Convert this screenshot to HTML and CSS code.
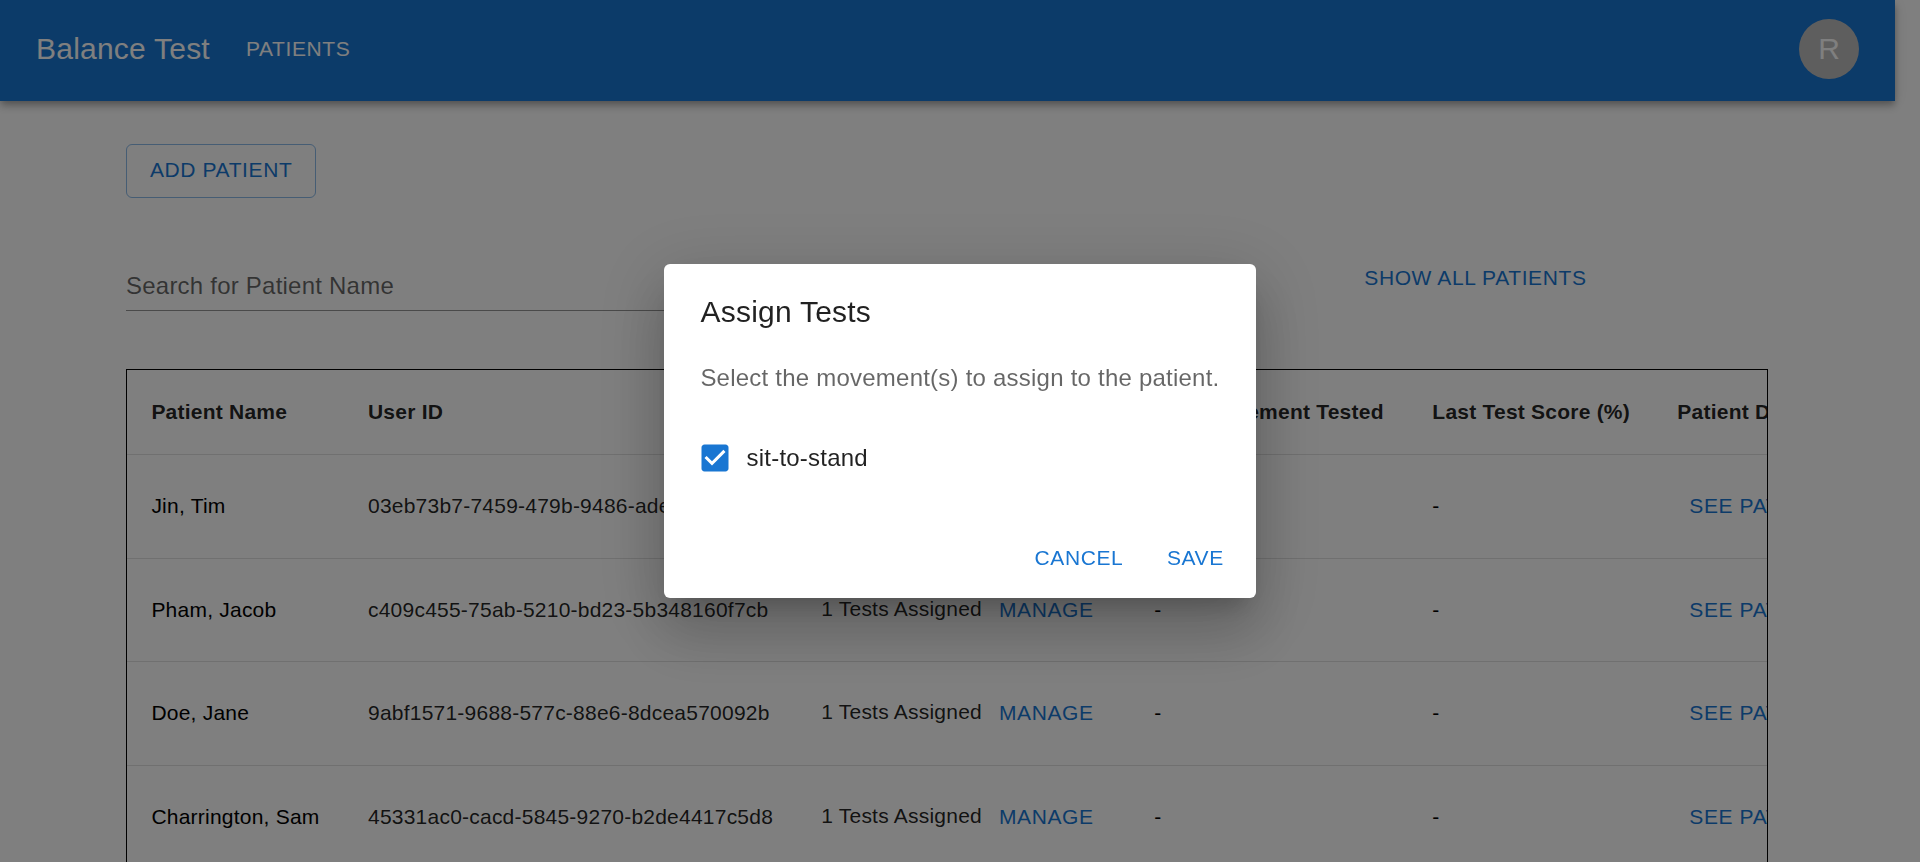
FILE: index.html
```
<!DOCTYPE html>
<html lang="en">
<head>
<meta charset="utf-8">
<title>Balance Test</title>
<link rel="stylesheet" href="styles.css">
</head>
<body>
<div class="page">
  <header class="appbar">
    <div class="brand">Balance Test</div>
    <a class="nav-link">PATIENTS</a>
    <div class="avatar">R</div>
  </header>
  <main class="content">
    <button class="btn btn-outlined">ADD PATIENT</button>
    <div class="search-row">
      <div class="search-field">Search for Patient Name</div>
      <button class="btn show-all">SHOW ALL PATIENTS</button>
    </div>
    <div class="table">
      <div class="row head">
        <div class="cell">Patient Name</div><div class="cell">User ID</div><div class="cell">Assigned Tests</div><div class="cell">Last Movement Tested</div><div class="cell">Last Test Score (%)</div><div class="cell">Patient Details</div>
      </div>
      <div class="row">
        <div class="cell name">Jin, Tim</div><div class="cell">03eb73b7-7459-479b-9486-ade</div><div class="cell tests"><span class="count">1 Tests Assigned</span><button class="btn">MANAGE</button></div><div class="cell name">-</div><div class="cell name">-</div><div class="cell"><button class="btn">SEE PATIENT</button></div>
      </div>
      <div class="row">
        <div class="cell name">Pham, Jacob</div><div class="cell">c409c455-75ab-5210-bd23-5b348160f7cb</div><div class="cell tests"><span class="count">1 Tests Assigned</span><button class="btn">MANAGE</button></div><div class="cell name">-</div><div class="cell name">-</div><div class="cell"><button class="btn">SEE PATIENT</button></div>
      </div>
      <div class="row">
        <div class="cell name">Doe, Jane</div><div class="cell">9abf1571-9688-577c-88e6-8dcea570092b</div><div class="cell tests"><span class="count">1 Tests Assigned</span><button class="btn">MANAGE</button></div><div class="cell name">-</div><div class="cell name">-</div><div class="cell"><button class="btn">SEE PATIENT</button></div>
      </div>
      <div class="row">
        <div class="cell name">Charrington, Sam</div><div class="cell">45331ac0-cacd-5845-9270-b2de4417c5d8</div><div class="cell tests"><span class="count">1 Tests Assigned</span><button class="btn">MANAGE</button></div><div class="cell name">-</div><div class="cell name">-</div><div class="cell"><button class="btn">SEE PATIENT</button></div>
      </div>
    </div>
  </main>
</div>
<div class="backdrop">
  <div class="dialog" role="dialog">
    <h2 class="dialog-title">Assign Tests</h2>
    <div class="dialog-content">
      <p class="dialog-text">Select the movement(s) to assign to the patient.</p>
      <label class="check">
        <svg class="check-icon" viewBox="0 0 24 24"><path d="M19 3H5c-1.11 0-2 .9-2 2v14c0 1.1.89 2 2 2h14c1.11 0 2-.9 2-2V5c0-1.1-.89-2-2-2zm-9 14l-5-5 1.41-1.41L10 14.17l7.59-7.59L19 8l-9 9z"/></svg>
        <span>sit-to-stand</span>
      </label>
    </div>
    <div class="dialog-actions">
      <button class="btn">CANCEL</button>
      <button class="btn">SAVE</button>
    </div>
  </div>
</div>
</body>
</html>
```
FILE: styles.css
```
* { box-sizing: border-box; }
body {
  margin: 0;
  height: 862px;
  overflow: hidden;
  background: #fff;
  color: rgba(0, 0, 0, .87);
  font-family: "Liberation Sans", Arial, sans-serif;
}
.page { width: 1895px; height: 862px; overflow: visible; }
.appbar {
  display: flex;
  align-items: center;
  height: 101px;
  padding: 0 36px 3px;
  background: #1976d2;
  color: #fff;
  box-shadow: 0 3px 6px -1.5px rgba(0,0,0,.2), 0 6px 7.5px rgba(0,0,0,.14), 0 1.5px 15px rgba(0,0,0,.12);
}
.brand { font-size: 30px; line-height: 48px; letter-spacing: .225px; }
.nav-link { margin-left: 36px; padding-bottom: 1px; font-size: 21px; line-height: 36px; letter-spacing: .6px; }
.avatar {
  display: flex;
  align-items: center;
  justify-content: center;
  width: 60px;
  height: 60px;
  margin-left: auto;
  padding-bottom: 1px;
  border-radius: 50%;
  background: #bdbdbd;
  font-size: 30px;
  line-height: 30px;
}
.content { padding: 43px 127px 0 126px; }
.btn {
  min-width: 96px;
  padding: 9px 12px;
  border: 0;
  border-radius: 6px;
  background: none;
  color: #1976d2;
  font: 21px/36.75px "Liberation Sans", Arial, sans-serif;
  letter-spacing: .6px;
  white-space: nowrap;
}
.btn-outlined {
  display: block;
  height: 54px;
  padding: 6.5px 23px 9.5px;
  border: 1px solid rgba(25, 118, 210, .5);
  line-height: 36px;
}
.search-row { display: flex; justify-content: space-between; height: 171px; padding-top: 52px; }
.search-field {
  width: 640px;
  height: 61px;
  padding: 18px 0 0;
  border-bottom: 1px solid rgba(0,0,0,.42);
  color: rgba(0,0,0,.6);
  font-size: 24px;
  line-height: 35px;
  letter-spacing: .225px;
}
.show-all { align-self: flex-start; margin: 1px 169.5px 0 0; }
.table { height: 520px; overflow: hidden; border: 1px solid #000; }
.row {
  display: grid;
  grid-template-columns: 216.6px 453.2px 333.2px 278px 245px 260px;
  width: 1786px;
  height: 103.6px;
  border-bottom: 1px solid #e0e0e0;
}
.head { height: 85px; font-weight: 700; }
.cell {
  display: flex;
  align-items: center;
  padding: 0 23.6px 0 24.4px;
  font-size: 21px;
  line-height: 30px;
  letter-spacing: .225px;
  white-space: nowrap;
}
.name { color: #000; }
.count { padding-bottom: 2px; margin-right: 5px; }
.backdrop {
  position: fixed;
  inset: 0;
  display: flex;
  align-items: center;
  justify-content: center;
  background: rgba(0,0,0,.5);
}
.dialog {
  width: 592px;
  height: 334px;
  border-radius: 6px;
  background: #fff;
  box-shadow: 0 16.5px 22.5px -10.5px rgba(0,0,0,.2), 0 36px 57px 4.5px rgba(0,0,0,.14), 0 13.5px 69px 12px rgba(0,0,0,.12);
}
.dialog-title { margin: 0; padding: 24px 36px 24px 36.5px; font-size: 30px; font-weight: 400; line-height: 48px; letter-spacing: .225px; }
.dialog-content { padding: 0 35px 30px 36.4px; font-size: 24px; line-height: 36px; letter-spacing: .225px; }
.dialog-text { margin: 0 0 30px; color: rgba(0,0,0,.6); white-space: nowrap; }
.check { display: flex; align-items: center; gap: 13.5px; height: 63px; margin-left: -3.4px; }
.check-icon { width: 36px; height: 36px; fill: #1976d2; }
.dialog-actions { display: flex; justify-content: flex-end; gap: 12px; padding: 12px 12.6px; }
```
